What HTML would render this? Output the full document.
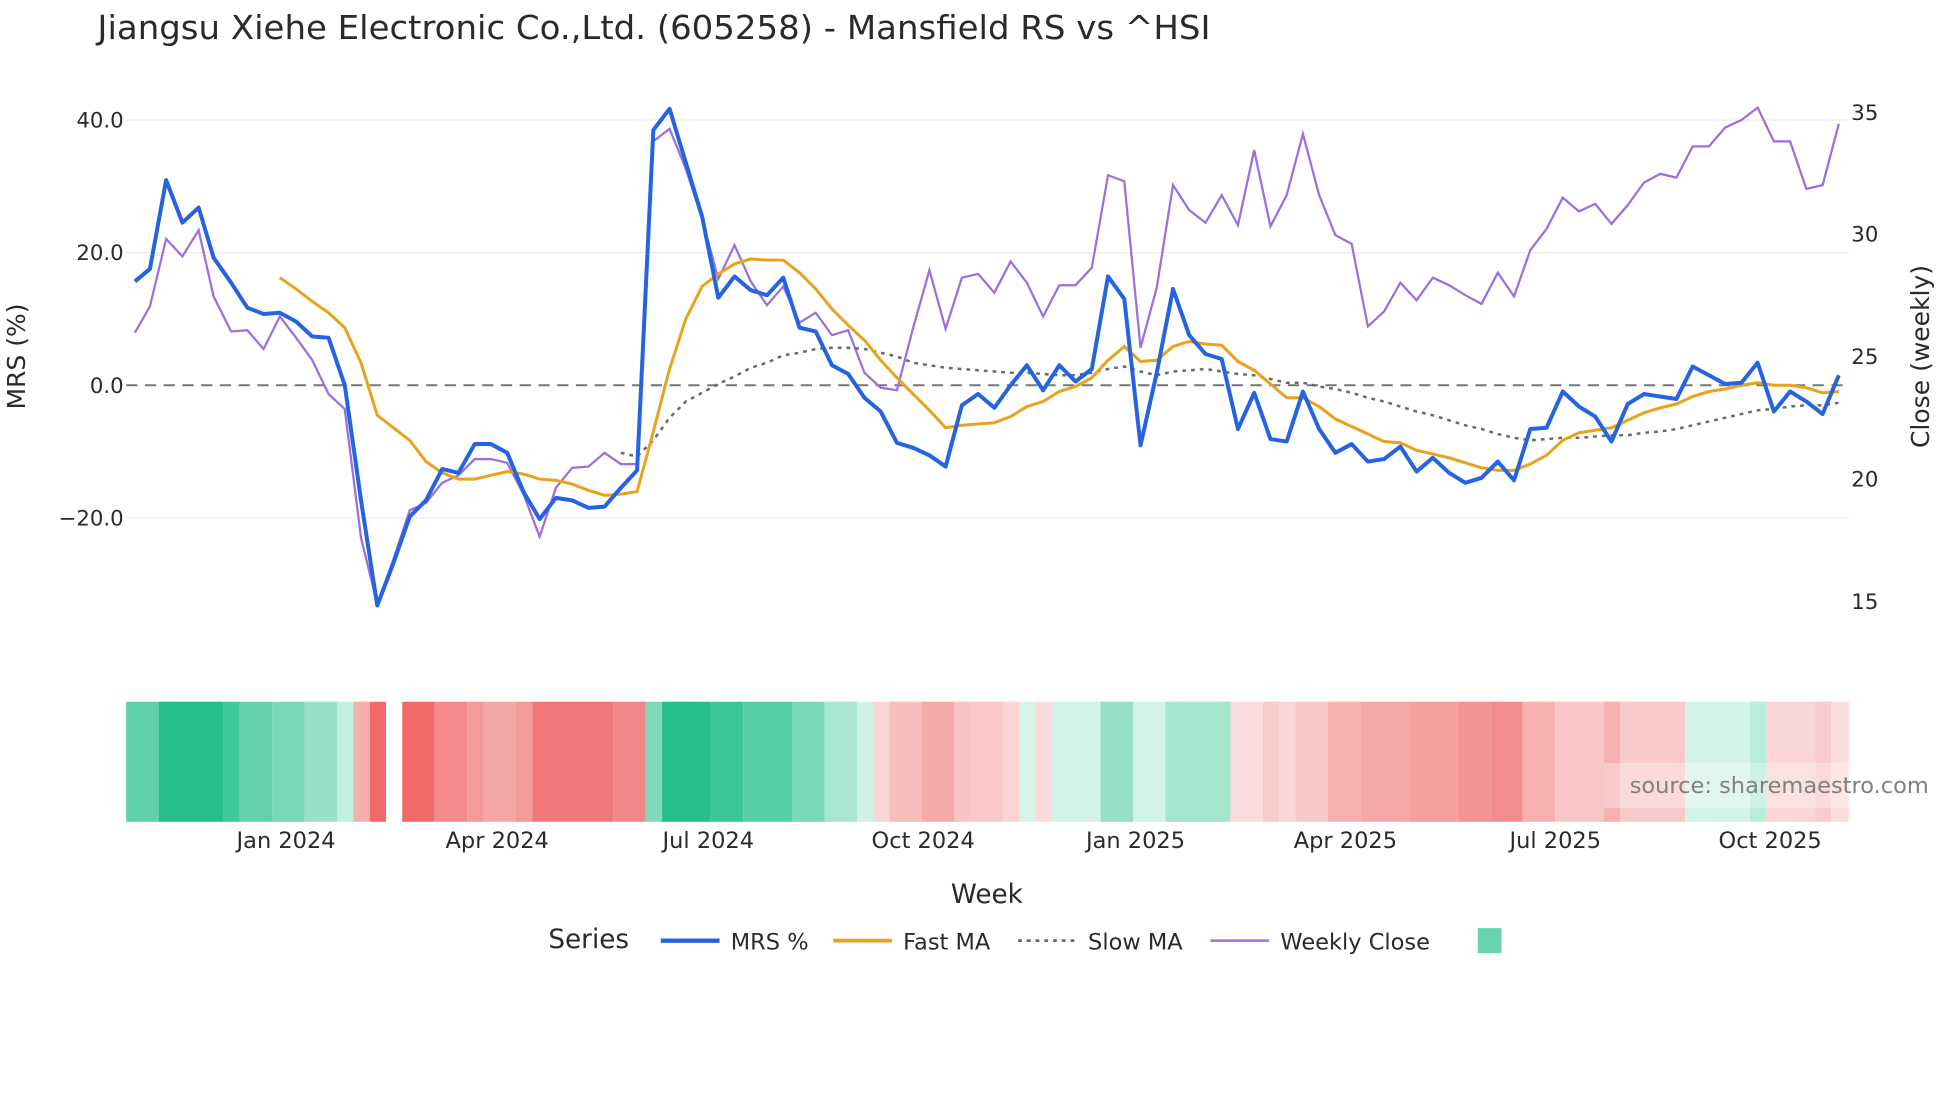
<!DOCTYPE html>
<html><head><meta charset="utf-8"><style>
html,body{margin:0;padding:0;background:#fff;width:1960px;height:1102px;overflow:hidden}
svg{display:block}
text{font-family:"DejaVu Sans","Liberation Sans",sans-serif;fill:#2a2a2a}
</style></head><body>
<svg width="1960" height="1102" viewBox="0 0 1569 881" preserveAspectRatio="none" xmlns="http://www.w3.org/2000/svg">
<rect width="1569" height="881" fill="#fff"/>
<text x="78" y="31" font-size="26" fill="#333" textLength="891" lengthAdjust="spacingAndGlyphs">Jiangsu Xiehe Electronic Co.,Ltd. (605258) - Mansfield RS vs ^HSI</text>
<g stroke="#ececec" stroke-width="1">
<line x1="101" y1="96" x2="1480" y2="96"/><line x1="101" y1="202" x2="1480" y2="202"/><line x1="101" y1="414" x2="1480" y2="414"/>
</g>
<line x1="101" y1="308" x2="1480" y2="308" stroke="#777" stroke-width="1.6" stroke-dasharray="9,6"/>
<g font-size="17" text-anchor="end">
<text x="99" y="102">40.0</text><text x="99" y="208">20.0</text><text x="99" y="314">0.0</text><text x="99" y="420">−20.0</text>
</g>
<g font-size="17">
<text x="1482" y="96">35</text><text x="1482" y="193">30</text><text x="1482" y="291">25</text><text x="1482" y="389">20</text><text x="1482" y="487">15</text>
</g>
<text transform="translate(20,285) rotate(-90)" font-size="20" text-anchor="middle">MRS (%)</text>
<text transform="translate(1544,285) rotate(-90)" font-size="20" text-anchor="middle">Close (weekly)</text>
<polyline fill="none" stroke="#9b6fe0" stroke-width="1.8" points="108,266 120,245 133,191 146,205 159,184 171,237 185,265 198,264 211,279 224,253 237,270 250,288 263,315 276,327 289,430 302,483 315,447 328,408 341,402 354,386 367,380 380,367 393,367 406,370 419,395 432,429 445,390 458,374 471,373 484,362 497,371 510,371 523,113 536,103 549,135 562,175 575,223 588,196 601,225 614,244 627,229 640,258 653,250 666,268 679,264 692,298 705,310 718,312 731,262 744,216 757,263 770,222 783,219 796,234 809,209 822,226 835,253 848,228 861,228 874,214 887,140 900,145 913,278 926,230 939,148 952,168 965,178 978,156 991,180 1004,120 1017,181 1030,156 1043,107 1056,156 1069,188 1082,195 1095,261 1108,249 1121,226 1134,240 1147,222 1160,228 1173,236 1186,243 1199,218 1212,237 1225,200 1238,183 1251,158 1264,169 1277,163 1290,179 1303,164 1316,146 1329,139 1342,142 1355,117 1368,117 1381,102 1394,96 1407,86 1420,113 1433,113 1446,151 1459,148 1472,99"/>
<polyline fill="none" stroke="#6a6a6a" stroke-width="2" stroke-dasharray="3,4" points="497,362 510,365 523,352 536,334 549,321 562,314 575,307 588,301 601,294 614,290 627,284 640,282 653,279 666,278 679,278 692,279 705,282 718,285 731,290 744,292 757,294 770,295 783,296 796,297 809,298 822,298 835,299 848,300 861,300 874,298 887,295 900,293 913,297 926,300 939,297 952,296 965,295 978,297 991,299 1004,300 1017,303 1030,306 1043,306 1056,309 1069,311 1082,314 1095,318 1108,321 1121,325 1134,329 1147,332 1160,336 1173,340 1186,343 1199,347 1212,350 1225,352 1238,351 1251,350 1264,350 1277,349 1290,348 1303,348 1316,346 1329,345 1342,343 1355,340 1368,337 1381,334 1394,331 1407,328 1420,327 1433,325 1446,324 1459,324 1472,322"/>
<polyline fill="none" stroke="#e8a21c" stroke-width="2.4" points="224,222 237,231 250,241 263,250 276,262 289,290 302,332 315,342 328,352 341,369 354,378 367,383 380,383 393,380 406,377 419,379 432,383 445,384 458,387 471,392 484,396 497,395 510,393 523,345 536,295 549,255 562,229 575,219 588,211 601,207 614,208 627,208 640,218 653,231 666,247 679,260 692,272 705,288 718,302 731,315 744,328 757,342 770,340 783,339 796,338 809,333 822,325 835,321 848,313 861,309 874,302 887,288 900,277 913,289 926,288 939,277 952,273 965,275 978,276 991,289 1004,296 1017,307 1030,318 1043,318 1056,325 1069,335 1082,341 1095,347 1108,353 1121,354 1134,360 1147,363 1160,366 1173,370 1186,374 1199,376 1212,376 1225,371 1238,364 1251,352 1264,346 1277,344 1290,342 1303,336 1316,330 1329,326 1342,323 1355,317 1368,313 1381,311 1394,308 1407,306 1420,308 1433,308 1446,310 1459,314 1472,313"/>
<polyline fill="none" stroke="#2563e0" stroke-width="3.2" stroke-linejoin="round" points="108,225 120,215 133,144 146,178 159,166 171,206 185,226 198,246 211,251 224,250 237,257 250,269 263,270 276,308 289,400 302,484 315,450 328,413 341,400 354,375 367,378 380,355 393,355 406,362 419,393 432,415 445,398 458,400 471,406 484,405 497,390 510,376 523,104 536,87 549,130 562,173 575,238 588,221 601,232 614,236 627,222 640,262 653,265 666,292 679,299 692,318 705,329 718,354 731,358 744,364 757,373 770,324 783,315 796,326 809,308 822,292 835,312 848,292 861,305 874,295 887,221 900,239 913,356 926,298 939,231 952,268 965,283 978,287 991,343 1004,314 1017,351 1030,353 1043,313 1056,343 1069,362 1082,355 1095,369 1108,367 1121,357 1134,377 1147,366 1160,378 1173,386 1186,382 1199,369 1212,384 1225,343 1238,342 1251,313 1264,325 1277,333 1290,353 1303,323 1316,315 1329,317 1342,319 1355,293 1368,300 1381,307 1394,306 1407,290 1420,329 1433,313 1446,321 1459,331 1472,300"/>
<g>
<rect x="101" y="561" width="26" height="96" fill="#5fd0aa"/>
<rect x="127" y="561" width="52" height="96" fill="#26bf8c"/>
<rect x="179" y="561" width="13" height="96" fill="#3fc89a"/>
<rect x="192" y="561" width="26" height="96" fill="#62d1ab"/>
<rect x="218" y="561" width="26" height="96" fill="#7bd8b7"/>
<rect x="244" y="561" width="26" height="96" fill="#98e1c7"/>
<rect x="270" y="561" width="13" height="96" fill="#bff0df"/>
<rect x="283" y="561" width="13" height="96" fill="#f6aeae"/>
<rect x="296" y="561" width="13" height="96" fill="#f06a6a"/>
<rect x="322" y="561" width="26" height="96" fill="#f06a6a"/>
<rect x="348" y="561" width="26" height="96" fill="#f48a8a"/>
<rect x="374" y="561" width="13" height="96" fill="#f39a9a"/>
<rect x="387" y="561" width="26" height="96" fill="#f5a6a6"/>
<rect x="413" y="561" width="13" height="96" fill="#f39a9a"/>
<rect x="426" y="561" width="65" height="96" fill="#f07878"/>
<rect x="491" y="561" width="26" height="96" fill="#f38686"/>
<rect x="517" y="561" width="13" height="96" fill="#80d9b8"/>
<rect x="530" y="561" width="39" height="96" fill="#26bf8c"/>
<rect x="569" y="561" width="26" height="96" fill="#3cc797"/>
<rect x="595" y="561" width="39" height="96" fill="#55cea3"/>
<rect x="634" y="561" width="26" height="96" fill="#7bd8b7"/>
<rect x="660" y="561" width="26" height="96" fill="#a8e6d0"/>
<rect x="686" y="561" width="13" height="96" fill="#d0f2e6"/>
<rect x="699" y="561" width="13" height="96" fill="#fad6d6"/>
<rect x="712" y="561" width="26" height="96" fill="#f7bcbc"/>
<rect x="738" y="561" width="26" height="96" fill="#f5aaaa"/>
<rect x="764" y="561" width="13" height="96" fill="#f8c4c4"/>
<rect x="777" y="561" width="26" height="96" fill="#fac8c8"/>
<rect x="803" y="561" width="13" height="96" fill="#fad3d3"/>
<rect x="816" y="561" width="13" height="96" fill="#d5f3e9"/>
<rect x="829" y="561" width="13" height="96" fill="#fadada"/>
<rect x="842" y="561" width="39" height="96" fill="#d3f2e8"/>
<rect x="881" y="561" width="26" height="96" fill="#95dfc4"/>
<rect x="907" y="561" width="26" height="96" fill="#d3f2e8"/>
<rect x="933" y="561" width="52" height="96" fill="#a5e6cf"/>
<rect x="985" y="561" width="26" height="96" fill="#fbdcdc"/>
<rect x="1011" y="561" width="13" height="96" fill="#f9cccc"/>
<rect x="1024" y="561" width="13" height="96" fill="#fad6d6"/>
<rect x="1037" y="561" width="26" height="96" fill="#f8c8c8"/>
<rect x="1063" y="561" width="26" height="96" fill="#f6b0b0"/>
<rect x="1089" y="561" width="39" height="96" fill="#f5a8a8"/>
<rect x="1128" y="561" width="39" height="96" fill="#f4a0a0"/>
<rect x="1167" y="561" width="26" height="96" fill="#f39494"/>
<rect x="1193" y="561" width="26" height="96" fill="#f28e8e"/>
<rect x="1219" y="561" width="26" height="96" fill="#f6b0b0"/>
<rect x="1245" y="561" width="39" height="96" fill="#f8c6c6"/>
<rect x="1284" y="561" width="13" height="96" fill="#f6b0b0"/>
<rect x="1297" y="561" width="52" height="96" fill="#f9caca"/>
<rect x="1349" y="561" width="52" height="96" fill="#d3f2e8"/>
<rect x="1401" y="561" width="13" height="96" fill="#b8ecdb"/>
<rect x="1414" y="561" width="39" height="96" fill="#fad6d6"/>
<rect x="1453" y="561" width="13" height="96" fill="#f8cccc"/>
<rect x="1466" y="561" width="14" height="96" fill="#fbdcdc"/>
</g>
<rect x="1284" y="610" width="262" height="36" fill="#fff" fill-opacity="0.3"/>
<text x="1544" y="634" font-size="18" text-anchor="end" style="fill:#808080">source: sharemaestro.com</text>
<g font-size="18" text-anchor="middle">
<text x="229" y="678">Jan 2024</text><text x="398" y="678">Apr 2024</text><text x="567" y="678">Jul 2024</text><text x="739" y="678">Oct 2024</text><text x="909" y="678">Jan 2025</text><text x="1077" y="678">Apr 2025</text><text x="1245" y="678">Jul 2025</text><text x="1417" y="678">Oct 2025</text>
</g>
<text x="790" y="722" font-size="21" text-anchor="middle">Week</text>
<text x="439" y="758" font-size="21">Series</text>
<line x1="529" y1="752" x2="576" y2="752" stroke="#2563e0" stroke-width="3.5"/>
<text x="585" y="759" font-size="18">MRS %</text>
<line x1="667" y1="752" x2="714" y2="752" stroke="#e8a21c" stroke-width="3"/>
<text x="723" y="759" font-size="18">Fast MA</text>
<line x1="815" y1="752" x2="862" y2="752" stroke="#6a6a6a" stroke-width="2.2" stroke-dasharray="3,4"/>
<text x="871" y="759" font-size="18">Slow MA</text>
<line x1="969" y1="752" x2="1016" y2="752" stroke="#9b6fe0" stroke-width="2"/>
<text x="1025" y="759" font-size="18">Weekly Close</text>
<rect x="1183" y="742" width="19" height="20" fill="#66d4ae"/>
</svg>
</body></html>
